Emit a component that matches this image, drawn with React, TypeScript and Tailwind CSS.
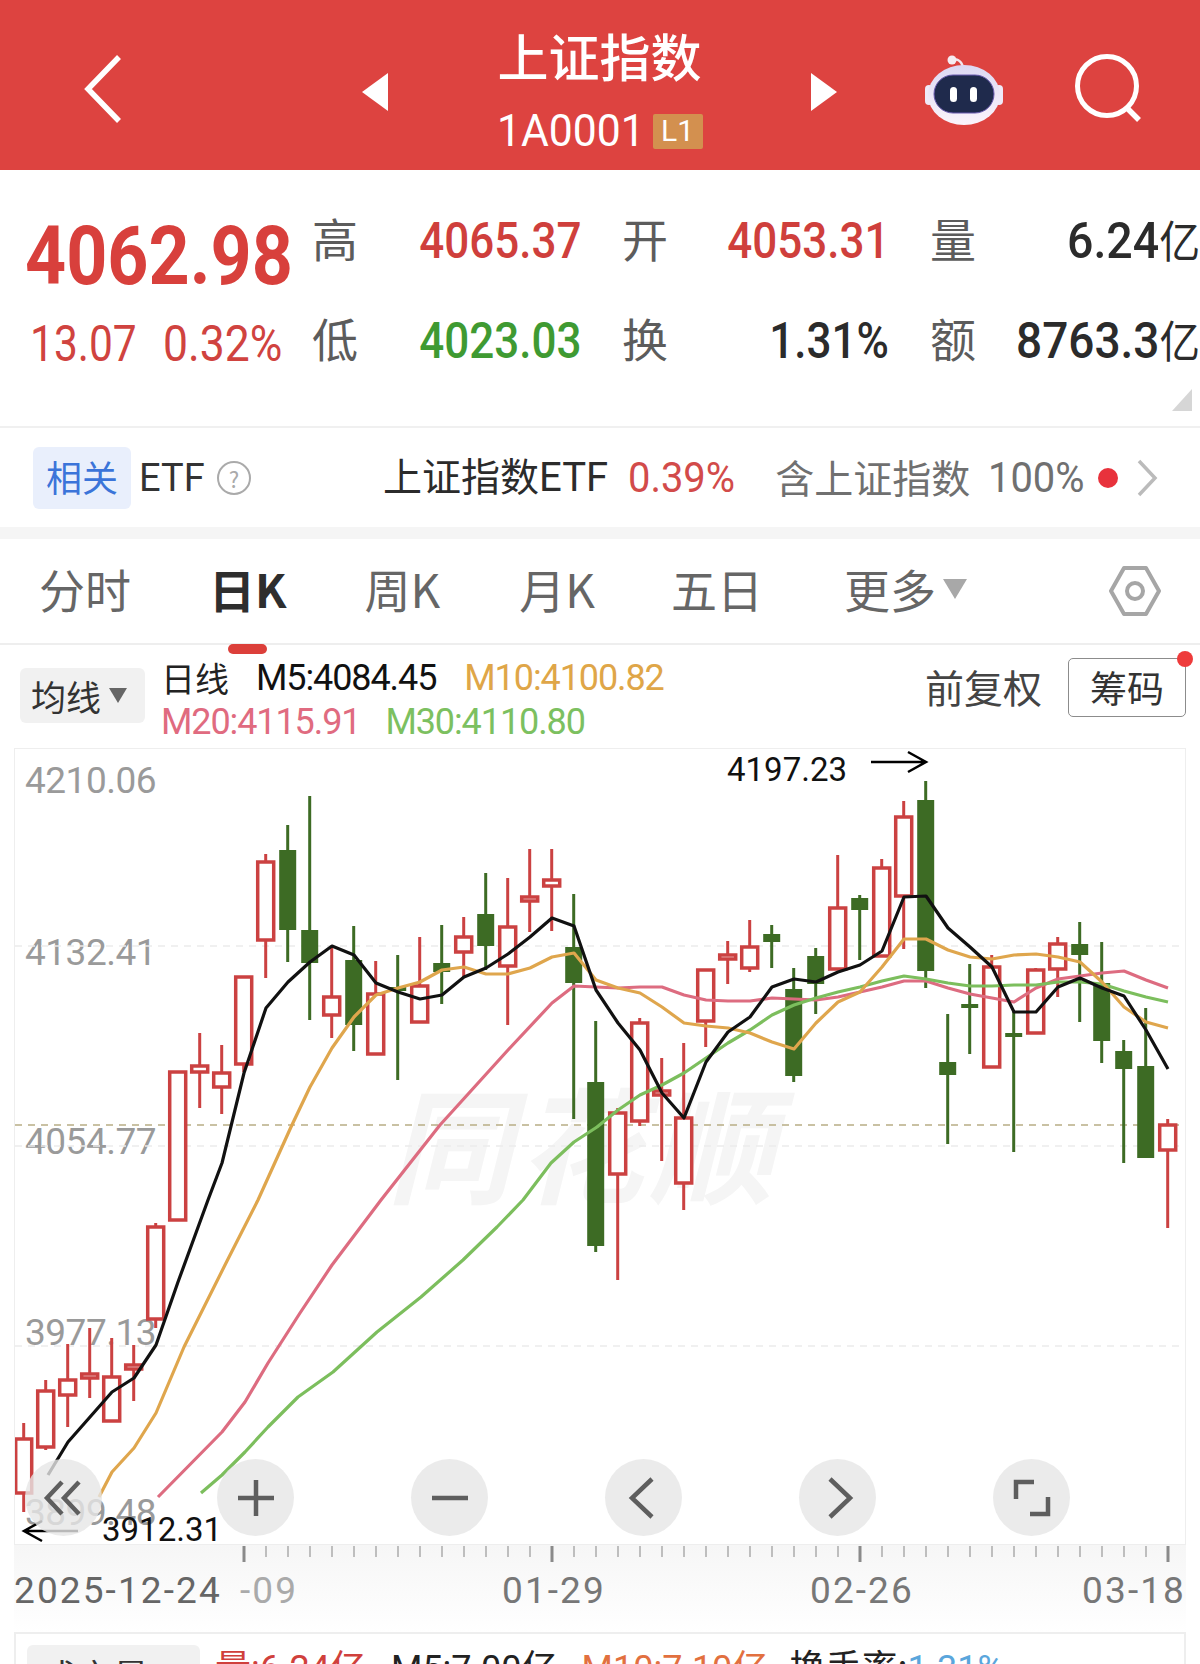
import React from 'react';

const CJK = '"Noto Sans CJK SC", sans-serif';
const NUM = 'Roboto, "Noto Sans CJK SC", sans-serif';

// [high, bodyTop, bodyBottom, low, isRed]
const CANDLES: [number, number, number, number, number][] = [
  [1423, 1439, 1493, 1512, 1], [1380, 1391, 1447, 1450, 1], [1344, 1380, 1395, 1427, 1],
  [1328, 1374, 1378, 1398, 1], [1338, 1377, 1421, 1421, 1], [1345, 1365, 1369, 1401, 1],
  [1223, 1227, 1319, 1328, 1], [1072, 1072, 1220, 1221, 1], [1033, 1066, 1072, 1108, 1],
  [1045, 1073, 1087, 1114, 1], [976, 977, 1064, 1072, 1], [854, 862, 940, 978, 1],
  [825, 850, 930, 962, 0], [796, 930, 963, 1020, 0], [947, 997, 1015, 1038, 1],
  [926, 960, 1025, 1051, 0], [961, 994, 1054, 1054, 1], [955, 987, 991, 1080, 0],
  [937, 986, 1022, 1022, 1], [925, 963, 972, 1004, 0], [917, 937, 952, 977, 1],
  [873, 914, 946, 970, 0], [878, 927, 966, 1025, 1], [849, 897, 901, 932, 1],
  [849, 880, 886, 931, 1], [894, 947, 983, 1119, 0], [1021, 1082, 1246, 1252, 0],
  [1108, 1113, 1174, 1280, 1], [1018, 1023, 1121, 1126, 1], [1058, 1091, 1095, 1161, 1],
  [1043, 1118, 1183, 1210, 1], [970, 970, 1021, 1047, 1], [941, 955, 959, 984, 1],
  [920, 947, 968, 972, 1], [925, 934, 942, 968, 0], [968, 989, 1076, 1082, 0],
  [948, 956, 984, 1014, 0], [855, 908, 969, 969, 1], [895, 898, 910, 960, 0],
  [859, 868, 956, 956, 1], [801, 817, 896, 949, 1], [781, 800, 971, 988, 0],
  [1014, 1062, 1075, 1144, 0], [964, 1004, 1008, 1054, 0], [955, 967, 1067, 1067, 1],
  [1012, 1033, 1037, 1152, 0], [968, 970, 1033, 1033, 1], [937, 944, 969, 997, 1],
  [922, 944, 955, 1022, 0], [942, 983, 1041, 1063, 0], [1040, 1051, 1069, 1163, 0],
  [1008, 1066, 1158, 1158, 0], [1119, 1125, 1150, 1228, 1],
];

const M5 = '48,1475 68,1442 90,1417 112,1392 134,1378 156,1345 178,1282 208,1200 222,1163 244,1073 266,1008 288,982 310,962 332,946 354,955 376,983 398,992 420,999 442,995 464,977 486,968 508,954 530,937 552,918 574,926 596,990 618,1023 640,1050 662,1093 684,1118 706,1062 728,1032 750,1017 772,987 794,979 816,982 838,972 860,965 882,951 904,897 926,896 948,928 970,947 992,967 1014,1012 1036,1012 1058,987 1080,978 1102,988 1124,996 1146,1030 1168,1069';
const M10 = '99,1497 112,1472 134,1448 156,1413 184,1347 226,1263 258,1200 291,1127 310,1087 332,1048 354,1017 376,995 398,988 420,982 442,970 464,967 486,974 508,974 530,968 552,957 574,953 596,980 618,988 640,993 662,1007 684,1023 706,1026 728,1028 750,1033 772,1042 794,1049 816,1023 838,1002 860,992 882,967 904,939 926,939 948,950 970,957 992,959 1014,955 1036,954 1058,957 1080,962 1102,982 1124,1007 1146,1022 1168,1028';
const M20 = '158,1497 222,1432 245,1402 268,1363 300,1313 332,1265 381,1200 440,1125 508,1050 552,1003 574,986 596,987 618,988 640,987 662,987 684,995 706,1000 728,1001 750,1001 772,998 794,999 816,1000 838,997 860,992 882,987 904,981 926,981 948,988 970,994 992,998 1014,1002 1036,988 1058,979 1080,976 1102,973 1124,971 1146,980 1168,988';
const M30 = '201,1493 222,1475 245,1452 268,1427 298,1397 333,1372 377,1332 421,1297 463,1260 497,1227 523,1200 551,1163 574,1142 597,1127 618,1110 640,1095 662,1085 684,1073 706,1058 728,1043 750,1030 772,1015 794,1005 816,998 838,992 860,987 882,981 904,976 926,979 948,983 970,986 992,986 1014,985 1036,985 1058,982 1080,982 1102,984 1124,991 1146,997 1168,1002';

const TICKS = Array.from({ length: 43 }, (_, i) => 244 + i * 22);

function Cell({ label, value, color }: { label: string; value: React.ReactNode; color: string }) {
  return (
    <div className="flex items-center justify-between h-[100px]">
      <span className="text-[46px] leading-none text-[#5c5c5c] -mt-[8px] -ml-[1px]" style={{ fontFamily: CJK }}>{label}</span>
      <span className={`inline-block origin-right text-[50px] leading-none font-medium ${color}`} style={{ fontFamily: NUM }}>{value}</span>
    </div>
  );
}

function Header() {
  return (
    <div className="flex items-center h-[170px] bg-[#dd4340] text-white">
      <svg className="ml-[84px] mt-[8px]" width="38" height="68" viewBox="0 0 38 68">
        <path d="M35 2 L4 34 L35 66" fill="none" stroke="#fff" strokeWidth="5.5" />
      </svg>
      <svg className="ml-[240px] mt-[14px]" width="26" height="38" viewBox="0 0 26 38">
        <path d="M26 0 L0 19 L26 38 Z" fill="#fff" />
      </svg>
      <div className="w-[423px] self-start pt-[25px] flex flex-col items-center">
        <div className="text-[51px] leading-[60px] font-medium" style={{ fontFamily: CJK }}>上证指数</div>
        <div className="flex items-center mt-[26px] h-[40px]">
          <span className="inline-block w-[143px] text-[44px] leading-none whitespace-nowrap origin-left scale-x-[0.97]" style={{ fontFamily: NUM }}>1A0001</span>
          <span className="ml-[13px] w-[50px] h-[35px] flex items-center justify-center bg-[#d3904f] text-[30px] leading-none rounded-[2px]" style={{ fontFamily: NUM }}>L1</span>
        </div>
      </div>
      <svg className="mt-[14px]" width="26" height="38" viewBox="0 0 26 38">
        <path d="M0 0 L26 19 L0 38 Z" fill="#fff" />
      </svg>
      <svg className="ml-[86px] mt-[8px]" width="82" height="72" viewBox="0 0 82 72">
        <defs>
          <linearGradient id="robotShell" x1="0" y1="0" x2="0" y2="1">
            <stop offset="0" stopColor="#dcd8f3" />
            <stop offset="1" stopColor="#fbf4fb" />
          </linearGradient>
        </defs>
        <path d="M30 8 C33 5 38 7 40 14" fill="none" stroke="#f3e6ee" strokeWidth="2.5" />
        <circle cx="29" cy="7" r="4.5" fill="#f6ecf2" />
        <rect x="2" y="32" width="8" height="20" rx="4" fill="#efe9f8" />
        <rect x="72" y="32" width="8" height="20" rx="4" fill="#efe9f8" />
        <ellipse cx="41" cy="42" rx="36" ry="30" fill="url(#robotShell)" />
        <rect x="11" y="22" width="60" height="38" rx="19" fill="#1f2a4c" stroke="#6a5bb0" strokeWidth="1" />
        <rect x="27" y="34" width="7" height="15" rx="3.5" fill="#fff" />
        <rect x="47" y="34" width="7" height="15" rx="3.5" fill="#fff" />
      </svg>
      <svg className="ml-[68px] mt-[8px]" width="72" height="72" viewBox="0 0 72 72">
        <circle cx="34" cy="33" r="29.5" fill="none" stroke="#fff" strokeWidth="5" />
        <path d="M54 55 L66 67" stroke="#fff" strokeWidth="5.5" />
      </svg>
    </div>
  );
}

function Stats() {
  return (
    <div className="relative flex h-[258px] border-b-2 border-[#f0f0f0] pl-[27px] pt-[21px]">
      <div className="w-[286px] shrink-0">
        <div className="-ml-[2px] text-[82px] leading-none font-bold text-[#d8403c] mt-[24px] origin-left scale-x-[0.875] whitespace-nowrap" style={{ fontFamily: NUM }}>4062.98</div>
        <div className="flex mt-[22px] text-[#d0433f] text-[50px] leading-none whitespace-nowrap" style={{ fontFamily: NUM }}>
          <span className="inline-block w-[133px] ml-[3px] origin-left scale-x-[0.85]">13.07</span>
          <span className="inline-block origin-left scale-x-[0.89]">0.32%</span>
        </div>
      </div>
      <div className="grid grid-cols-[268px_266px_269px] gap-x-[42px] h-[200px]">
        <Cell label="高" value="4065.37" color="text-[#cf3f3c] scale-x-[0.88]" />
        <Cell label="开" value="4053.31" color="text-[#cf3f3c] scale-x-[0.88]" />
        <Cell label="量" value={<span>6.24<span style={{ fontFamily: CJK }} className="text-[44px] font-normal">亿</span></span>} color="text-[#2b2b2b] scale-x-[0.93]" />
        <Cell label="低" value="4023.03" color="text-[#3f9a32] scale-x-[0.88]" />
        <Cell label="换" value="1.31%" color="text-[#2b2b2b] scale-x-[0.88]" />
        <Cell label="额" value={<span>8763.3<span style={{ fontFamily: CJK }} className="text-[44px] font-normal">亿</span></span>} color="text-[#2b2b2b] scale-x-[0.92]" />
      </div>
      <svg className="absolute right-[8px] bottom-[15px]" width="20" height="22" viewBox="0 0 20 22">
        <path d="M20 0 V22 H0 Z" fill="#d6d6d6" />
      </svg>
    </div>
  );
}

function EtfRow() {
  return (
    <div className="flex items-center h-[99px] pl-[33px] text-[39px] leading-none" style={{ fontFamily: CJK }}>
      <span className="w-[98px] h-[62px] pb-[4px] flex items-center justify-center rounded-[6px] bg-[#e9effc] text-[#3b74d9] text-[36px]">相关</span>
      <span className="ml-[8px] w-[70px] text-[38px] text-[#333]" style={{ fontFamily: NUM }}>ETF</span>
      <span className="ml-[8px] w-[34px] h-[34px] rounded-full border-2 border-[#aaa] text-[#aaa] text-[22px] flex items-center justify-center">?</span>
      <span className="ml-[132px] -mt-[3px] text-[#2b2b2b]">上证指数<span className="text-[40px]" style={{ fontFamily: NUM }}>ETF</span></span>
      <span className="ml-[20px] w-[110px] text-[42px] text-[#d24b4a] origin-left scale-x-[0.95]" style={{ fontFamily: NUM }}>0.39%</span>
      <span className="ml-[37px] -mt-[3px] text-[#707070]">含上证指数</span>
      <span className="ml-[18px] w-[96px] text-[42px] text-[#707070] origin-left scale-x-[0.95]" style={{ fontFamily: NUM }}>100%</span>
      <span className="ml-[14px] w-[20px] h-[20px] rounded-full bg-[#e8323c]" />
      <svg className="ml-[18px]" width="22" height="38" viewBox="0 0 22 38">
        <path d="M3 2 L19 19 L3 36" fill="none" stroke="#bbb" strokeWidth="3.5" />
      </svg>
    </div>
  );
}

function Tabs() {
  return (
    <div className="relative flex items-center h-[106px] pb-[6px] border-b-2 border-[#eeeeee] text-[46px] leading-none text-[#666]" style={{ fontFamily: CJK }}>
      <span className="ml-[39px]">分时</span>
      <span className="ml-[78px] font-bold text-[#2e2e2e] relative">
        日K
        <span className="absolute left-[19px] top-[79px] w-[39px] h-[10px] rounded-full bg-[#dc3f3a]" />
      </span>
      <span className="ml-[78px]">周K</span>
      <span className="ml-[79px]">月K</span>
      <span className="ml-[76px]">五日</span>
      <span className="ml-[81px]">更多</span>
      <svg className="ml-[7px] mt-[1px]" width="24" height="20" viewBox="0 0 24 20">
        <path d="M0 0 H24 L12 20 Z" fill="#a8a8a8" />
      </svg>
      <svg className="ml-[142px] mt-[6px]" width="52" height="52" viewBox="0 0 52 52">
        <path d="M15 3 H37 L50 26 L37 49 H15 L2 26 Z" fill="none" stroke="#a6a6a6" strokeWidth="4" strokeLinejoin="round" />
        <circle cx="26" cy="26" r="8" fill="none" stroke="#a6a6a6" strokeWidth="4" />
      </svg>
    </div>
  );
}

function Legend() {
  return (
    <div className="flex h-[103px] pl-[20px] leading-none" style={{ fontFamily: NUM }}>
      <div className="mt-[23px] w-[125px] h-[55px] flex items-center pl-[11px] bg-[#f1f1f1] rounded-[6px] text-[35px] text-[#333]" style={{ fontFamily: CJK }}>
        均线
        <svg className="ml-[8px]" width="18" height="15" viewBox="0 0 18 15"><path d="M0 0 H18 L9 15 Z" fill="#666" /></svg>
      </div>
      <div className="ml-[16px] mt-[11px] text-[36px] tracking-[-1.1px]">
        <div className="flex items-center h-[44px]">
          <span className="text-[34px] text-[#222] tracking-normal" style={{ fontFamily: CJK }}>日线</span>
          <span className="ml-[27px] text-[#111]">M5:4084.45</span>
          <span className="ml-[28px] text-[#dfa648]">M10:4100.82</span>
        </div>
        <div className="flex items-center h-[44px]">
          <span className="text-[#e06b80]">M20:4115.91</span>
          <span className="ml-[25px] text-[#7cc060]">M30:4110.80</span>
        </div>
      </div>
      <div className="ml-auto mt-[13px] flex items-center h-[59px] pr-[14px]">
        <span className="text-[39px] text-[#444] -mt-[2px]" style={{ fontFamily: CJK }}>前复权</span>
        <span className="relative ml-[26px] w-[118px] h-[59px] flex items-center justify-center border border-[#8c8c8c] rounded-[5px] text-[37px] text-[#333]" style={{ fontFamily: CJK }}>
          筹码
          <span className="absolute -right-[8px] -top-[8px] w-[16px] h-[16px] rounded-full bg-[#ee3b3b]" />
        </span>
      </div>
    </div>
  );
}

function RoundButton({ left, children }: { left: number; children: React.ReactNode }) {
  return (
    <div className="absolute top-[710px] w-[77px] h-[77px] rounded-full bg-[#e6e6e6]/80 flex items-center justify-center" style={{ left }}>
      <svg width="44" height="44" viewBox="0 0 44 44" fill="none" stroke="#5e5e5e" strokeWidth="4.5">{children}</svg>
    </div>
  );
}

function PriceLabel({ top, text }: { top: number; text: string }) {
  return (
    <span className="absolute left-[10px] text-[37px] leading-none text-[#9a9a9a]" style={{ top, fontFamily: NUM, letterSpacing: '-0.5px' }}>{text}</span>
  );
}

function Chart() {
  return (
    <div className="relative ml-[14px] w-[1172px] h-[797px] border border-[#eeeeee] overflow-hidden" style={{ fontFamily: NUM }}>
      <div className="absolute left-[372px] top-[328px] text-[125px] leading-none font-bold italic text-[#f5f5f5] tracking-[6px]" style={{ fontFamily: CJK }}>同花顺</div>
      <PriceLabel top={13} text="4210.06" />
      <PriceLabel top={185} text="4132.41" />
      <PriceLabel top={374} text="4054.77" />
      <PriceLabel top={565} text="3977.13" />
      <PriceLabel top={745} text="3899.48" />

      <svg className="absolute inset-0" width="1170" height="795" viewBox="15 749 1170 795">
        {[946, 1146, 1346].map((y) => (
          <line key={y} x1="15" x2="1185" y1={y} y2={y} stroke="#ececec" strokeWidth="1.5" strokeDasharray="7 6" />
        ))}
        <line x1="15" x2="1185" y1="1125" y2="1125" stroke="#b8ad85" strokeWidth="1.5" strokeDasharray="7 6" />

        {CANDLES.map(([high, top, bottom, low, red], i) => {
          const x = 23.7 + i * 22;
          const color = red ? '#cb4141' : '#3d6b24';
          return (
            <g key={i}>
              <line x1={x} x2={x} y1={high} y2={top} stroke={color} strokeWidth="3" />
              <line x1={x} x2={x} y1={bottom} y2={low} stroke={color} strokeWidth="3" />
              {red ? (
                <rect x={x - 8} y={top} width="16" height={bottom - top} fill="#fff" stroke={color} strokeWidth="3.5" />
              ) : (
                <rect x={x - 8.5} y={top} width="17" height={bottom - top} fill={color} />
              )}
            </g>
          );
        })}

        <polyline points={M20} fill="none" stroke="#dd6c80" strokeWidth="3.2" strokeLinejoin="round" />
        <polyline points={M30} fill="none" stroke="#7cbe5d" strokeWidth="3.2" strokeLinejoin="round" />
        <polyline points={M10} fill="none" stroke="#dfa64d" strokeWidth="3.2" strokeLinejoin="round" />
        <polyline points={M5} fill="none" stroke="#111" strokeWidth="3.2" strokeLinejoin="round" />

        <path d="M871 762 H925 M908 752 L926 762 L908 772" fill="none" stroke="#000" strokeWidth="2.5" />
        <path d="M78 1531 H25 M42 1521 L24 1531 L42 1541" fill="none" stroke="#000" strokeWidth="2.5" />
      </svg>

      <span className="absolute left-[712px] top-[4px] text-[33px] leading-none text-[#111]" style={{ fontFamily: NUM }}>4197.23</span>

      <RoundButton left={10}>
        <path d="M20 6 L5 22 L20 38 M37 6 L22 22 L37 38" />
      </RoundButton>
      <span className="absolute left-[87px] top-[764px] text-[33px] leading-none text-[#111]" style={{ fontFamily: NUM }}>3912.31</span>
      <RoundButton left={202}>
        <path d="M22 4 V40 M4 22 H40" />
      </RoundButton>
      <RoundButton left={396}>
        <path d="M4 22 H40" />
      </RoundButton>
      <RoundButton left={590}>
        <path d="M30 3 L10 22 L30 41" />
      </RoundButton>
      <RoundButton left={784}>
        <path d="M14 3 L34 22 L14 41" />
      </RoundButton>
      <RoundButton left={978}>
        <path d="M6 23 V6 H24 M38 21 V38 H20" />
      </RoundButton>
    </div>
  );
}

function Axis() {
  return (
    <div className="relative ml-[14px] w-[1172px] h-[87px] bg-gradient-to-b from-[#f6f6f6] to-white overflow-hidden" style={{ fontFamily: NUM }}>
      <svg className="absolute inset-0" width="1172" height="20" viewBox="14 1545 1172 20">
        {TICKS.map((x, i) => (
          <line
            key={x}
            x1={x}
            x2={x}
            y1="1546"
            y2={i % 14 === 0 ? 1562 : 1557}
            stroke={i % 14 === 0 ? '#8a8a8a' : '#ababab'}
            strokeWidth={i % 14 === 0 ? 3 : 1.5}
          />
        ))}
      </svg>
      <div className="absolute top-[27px] inset-x-0 text-[37px] leading-none tracking-[2.1px] text-[#777]">
        <span className="absolute left-0 text-[#666]">2025-12-24</span>
        <span className="absolute left-[226px] text-[#aaa]">-09</span>
        <span className="absolute left-[488px]">01-29</span>
        <span className="absolute left-[796px]">02-26</span>
        <span className="absolute right-0">03-18</span>
      </div>
    </div>
  );
}

function VolumeBar() {
  return (
    <div className="ml-[14px] w-[1172px] h-[40px] border-x-2 border-t-2 border-[#eeeeee] overflow-hidden">
      <div className="flex mt-[11px] text-[36px] leading-[40px]" style={{ fontFamily: NUM }}>
        <div className="ml-[11px] w-[173px] h-[60px] flex items-center pl-[14px] bg-[#f1f1f1] rounded-[6px] text-[#333]" style={{ fontFamily: CJK }}>成交量</div>
        <span className="ml-[15px] text-[#d0403c]"><span style={{ fontFamily: CJK }}>量</span>:6.24<span style={{ fontFamily: CJK }}>亿</span></span>
        <span className="ml-[25px] text-[#222]">M5:7.00<span style={{ fontFamily: CJK }}>亿</span></span>
        <span className="ml-[24px] text-[#e2703f]">M10:7.10<span style={{ fontFamily: CJK }}>亿</span></span>
        <span className="ml-[21px] text-[#222]" style={{ fontFamily: CJK }}>换手率:<span className="text-[#5aa6dc]" style={{ fontFamily: NUM }}>1.31%</span></span>
      </div>
    </div>
  );
}

export default function App() {
  return (
    <div className="w-[1200px] h-[1664px] overflow-hidden bg-white">
      <Header />
      <Stats />
      <EtfRow />
      <div className="h-[12px] bg-[#f5f5f5]" />
      <Tabs />
      <Legend />
      <Chart />
      <Axis />
      <VolumeBar />
    </div>
  );
}
